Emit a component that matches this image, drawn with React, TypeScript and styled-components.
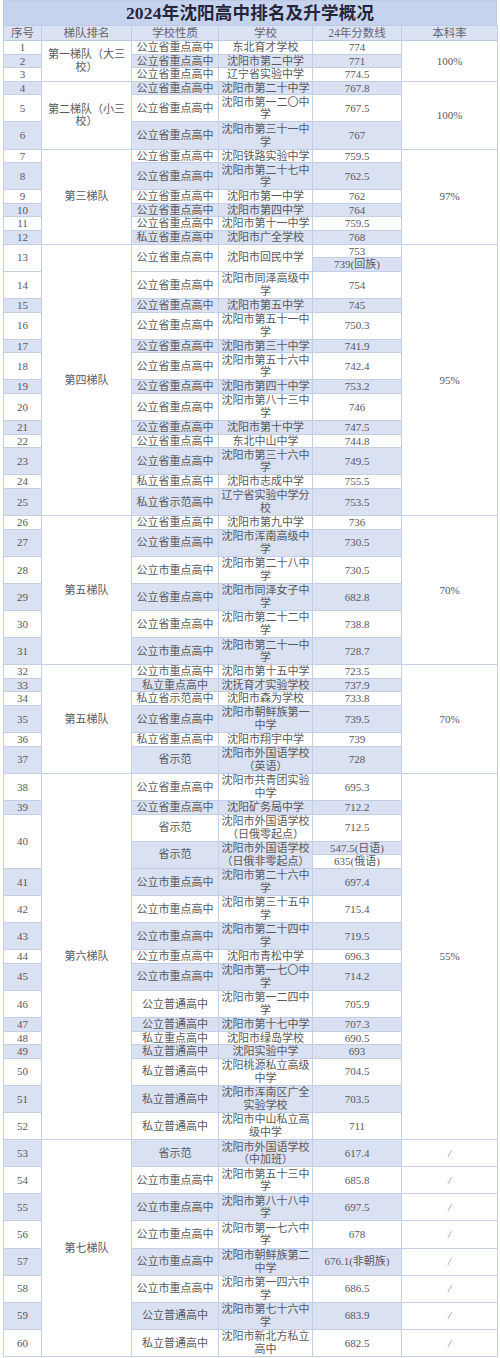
import React from "react";
import styled, { createGlobalStyle } from "styled-components";

const GlobalStyle = createGlobalStyle`
  body {
    margin: 0;
    background: #ffffff;
  }
`;

const LINE = 13.56;
const FONT = `"Liberation Serif", "Noto Sans CJK SC", serif`;

type Part = { kind: string; school: string; scores: string[]; shade: boolean };
type SchoolRow = { no: number; noShade: boolean; parts: Part[] };
type Tier = { name: string; rate?: string; rows: SchoolRow[] };

// [no, kind, school, score]
type Plain = [number, string, string, string];

const shadeOf = (no: number) => (no <= 12 ? no % 2 === 0 : no % 2 === 1);

const plain = (list: Plain[]): SchoolRow[] =>
  list.map(([no, kind, school, score]) => ({
    no,
    noShade: shadeOf(no),
    parts: [{ kind, school, scores: [score], shade: shadeOf(no) }],
  }));

const SZD = "公立省重点高中";
const SZS = "公立市重点高中";

const tiers: Tier[] = [
  {
    name: "第一梯队（大三\n校）",
    rate: "100%",
    rows: plain([
      [1, SZD, "东北育才学校", "774"],
      [2, SZD, "沈阳市第二中学", "771"],
      [3, SZD, "辽宁省实验中学", "774.5"],
    ]),
  },
  {
    name: "第二梯队（小三\n校）",
    rate: "100%",
    rows: plain([
      [4, SZD, "沈阳市第二十中学", "767.8"],
      [5, SZD, "沈阳市第一二〇中\n学", "767.5"],
      [6, SZD, "沈阳市第三十一中\n学", "767"],
    ]),
  },
  {
    name: "第三梯队",
    rate: "97%",
    rows: plain([
      [7, SZD, "沈阳铁路实验中学", "759.5"],
      [8, SZD, "沈阳市第二十七中\n学", "762.5"],
      [9, SZD, "沈阳市第一中学", "762"],
      [10, SZD, "沈阳市第四中学", "764"],
      [11, SZD, "沈阳市第十一中学", "759.5"],
      [12, "私立省重点高中", "沈阳市广全学校", "768"],
    ]),
  },
  {
    name: "第四梯队",
    rate: "95%",
    rows: [
      {
        no: 13,
        noShade: false,
        parts: [{ kind: SZD, school: "沈阳市回民中学", scores: ["753", "739(回族)"], shade: false }],
      },
      ...plain([
        [14, SZD, "沈阳市同泽高级中\n学", "754"],
        [15, SZD, "沈阳市第五中学", "745"],
        [16, SZD, "沈阳市第五十一中\n学", "750.3"],
        [17, SZD, "沈阳市第三十中学", "741.9"],
        [18, SZD, "沈阳市第五十六中\n学", "742.4"],
        [19, SZD, "沈阳市第四十中学", "753.2"],
        [20, SZD, "沈阳市第八十三中\n学", "746"],
        [21, SZD, "沈阳市第十中学", "747.5"],
        [22, SZD, "东北中山中学", "744.8"],
        [23, SZD, "沈阳市第三十六中\n学", "749.5"],
        [24, "私立省重点高中", "沈阳市志成中学", "755.5"],
        [25, "私立省示范高中", "辽宁省实验中学分\n校", "753.5"],
      ]),
    ],
  },
  {
    name: "第五梯队",
    rate: "70%",
    rows: plain([
      [26, SZD, "沈阳市第九中学", "736"],
      [27, SZD, "沈阳市浑南高级中\n学", "730.5"],
      [28, SZS, "沈阳市第二十八中\n学", "730.5"],
      [29, SZD, "沈阳市同泽女子中\n学", "682.8"],
      [30, SZD, "沈阳市第二十二中\n学", "738.8"],
      [31, SZS, "沈阳市第二十一中\n学", "728.7"],
    ]),
  },
  {
    name: "第五梯队",
    rate: "70%",
    rows: plain([
      [32, SZS, "沈阳市第十五中学", "723.5"],
      [33, "私立重点高中", "沈抚育才实验学校", "737.9"],
      [34, "私立省示范高中", "沈阳市森为学校", "733.8"],
      [35, SZD, "沈阳市朝鲜族第一\n中学", "739.5"],
      [36, "私立省重点高中", "沈阳市翔宇中学", "739"],
      [37, "省示范", "沈阳市外国语学校\n（英语）", "728"],
    ]),
  },
  {
    name: "第六梯队",
    rate: "55%",
    rows: [
      ...plain([
        [38, SZD, "沈阳市共青团实验\n中学", "695.3"],
        [39, SZD, "沈阳矿务局中学", "712.2"],
      ]),
      {
        no: 40,
        noShade: false,
        parts: [
          { kind: "省示范", school: "沈阳市外国语学校\n（日俄零起点）", scores: ["712.5"], shade: false },
          {
            kind: "省示范",
            school: "沈阳市外国语学校\n（日俄非零起点）",
            scores: ["547.5(日语)", "635(俄语)"],
            shade: true,
          },
        ],
      },
      ...plain([
        [41, SZS, "沈阳市第二十六中\n学", "697.4"],
        [42, SZS, "沈阳市第三十五中\n学", "715.4"],
        [43, SZS, "沈阳市第二十四中\n学", "719.5"],
        [44, SZS, "沈阳市青松中学", "696.3"],
        [45, SZS, "沈阳市第一七〇中\n学", "714.2"],
        [46, "公立普通高中", "沈阳市第一二四中\n学", "705.9"],
        [47, "公立普通高中", "沈阳市第十七中学", "707.3"],
        [48, "私立重点高中", "沈阳市绿岛学校", "690.5"],
        [49, "私立普通高中", "沈阳实验中学", "693"],
        [50, "私立普通高中", "沈阳桃源私立高级\n中学", "704.5"],
        [51, "私立普通高中", "沈阳市浑南区广全\n实验学校", "703.5"],
        [52, "私立普通高中", "沈阳市中山私立高\n级中学", "711"],
      ]),
    ],
  },
  {
    name: "第七梯队",
    rows: plain([
      [53, "省示范", "沈阳市外国语学校\n（中加班）", "617.4"],
      [54, SZS, "沈阳市第五十三中\n学", "685.8"],
      [55, SZS, "沈阳市第八十八中\n学", "697.5"],
      [56, SZS, "沈阳市第一七六中\n学", "678"],
      [57, SZS, "沈阳市朝鲜族第二\n中学", "676.1(非朝族)"],
      [58, SZS, "沈阳市第一四六中\n学", "686.5"],
      [59, "公立普通高中", "沈阳市第七十六中\n学", "683.9"],
      [60, "私立普通高中", "沈阳市新北方私立\n高中", "682.5"],
    ]),
  },
];

const columns = [38, 90, 87, 94, 89, 96];
const headers = ["序号", "梯队排名", "学校性质", "学校", "24年分数线", "本科率"];

const Page = styled.div`
  padding: 0 3px 4px;
  width: 494px;
`;

const Title = styled.div`
  height: 24px;
  line-height: 24px;
  background: #c6d3ee;
  border: 1px solid #bccae3;
  border-bottom: none;
  text-align: center;
  font-family: ${FONT};
  font-size: 17.5px;
  font-weight: 700;
  color: #25253a;
  letter-spacing: 0.2px;
`;

const Table = styled.table`
  width: 100%;
  border-collapse: collapse;
  table-layout: fixed;
  font-family: ${FONT};
  font-size: 11px;
  color: #585860;
`;

const Col = styled.col<{ $w: number }>`
  width: ${(p) => p.$w}px;
`;

const HeadCell = styled.th`
  height: 14px;
  padding: 0;
  background: #dae2f3;
  border: 1px solid #bccae3;
  font-weight: 400;
  font-size: 11.5px;
  line-height: 13px;
  color: #66666e;
  text-align: center;
`;

const Row = styled.tr<{ $lines: number }>`
  height: ${(p) => p.$lines * LINE}px;
`;

const Cell = styled.td<{ $shade?: boolean }>`
  padding: 0 1px;
  border: 1px solid #c3cfe6;
  background: ${(p) => (p.$shade ? "#d9e1f2" : "#ffffff")};
  text-align: center;
  vertical-align: middle;
  line-height: 12.6px;
  white-space: pre;
  overflow: hidden;
`;

const Slash = styled.span`
  color: #808080;
  font-style: italic;
`;

const spanOf = (row: SchoolRow) =>
  row.parts.reduce((a, p) => a + (p.scores.length > 1 ? p.scores.length : 1), 0);

function buildRows() {
  const out: React.ReactElement[] = [];
  tiers.forEach((tier, ti) => {
    const tierSpan = tier.rows.reduce((a, r) => a + spanOf(r), 0);
    let firstInTier = true;
    tier.rows.forEach((row) => {
      const span = spanOf(row);
      let firstInRow = true;
      row.parts.forEach((part, pi) => {
        const split = part.scores.length > 1;
        part.scores.forEach((score, si) => {
          const lines = split ? 1 : part.school.includes("\n") ? 2 : 1;
          const cells: React.ReactElement[] = [];
          if (firstInRow)
            cells.push(
              <Cell key="no" rowSpan={span} $shade={row.noShade}>
                {row.no}
              </Cell>
            );
          if (firstInTier)
            cells.push(
              <Cell key="tier" rowSpan={tierSpan}>
                {tier.name}
              </Cell>
            );
          if (si === 0) {
            cells.push(
              <Cell key="kind" rowSpan={part.scores.length} $shade={part.shade}>
                {part.kind}
              </Cell>
            );
            cells.push(
              <Cell key="school" rowSpan={part.scores.length} $shade={part.shade}>
                {part.school}
              </Cell>
            );
          }
          cells.push(
            <Cell key="score" $shade={si === 0 ? part.shade : !part.shade}>
              {score}
            </Cell>
          );
          if (tier.rate && firstInTier)
            cells.push(
              <Cell key="rate" rowSpan={tierSpan}>
                {tier.rate}
              </Cell>
            );
          if (!tier.rate && firstInRow)
            cells.push(
              <Cell key="rate" rowSpan={span}>
                <Slash>/</Slash>
              </Cell>
            );
          out.push(
            <Row key={`${ti}-${row.no}-${pi}-${si}`} $lines={lines}>
              {cells}
            </Row>
          );
          firstInRow = false;
          firstInTier = false;
        });
      });
    });
  });
  return out;
}

export default function App() {
  return (
    <>
      <GlobalStyle />
      <Page>
        <Title>2024年沈阳高中排名及升学概况</Title>
        <Table>
          <colgroup>
            {columns.map((w, i) => (
              <Col key={i} $w={w} />
            ))}
          </colgroup>
          <thead>
            <tr>
              {headers.map((h) => (
                <HeadCell key={h}>{h}</HeadCell>
              ))}
            </tr>
          </thead>
          <tbody>{buildRows()}</tbody>
        </Table>
      </Page>
    </>
  );
}
